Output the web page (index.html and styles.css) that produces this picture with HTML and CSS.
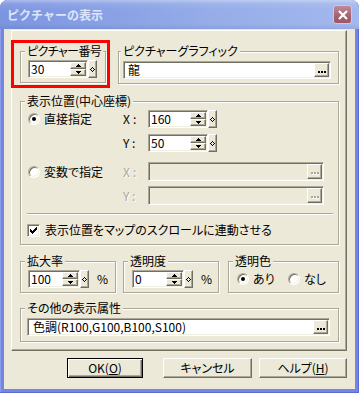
FILE: index.html
```html
<!DOCTYPE html>
<html lang="ja">
<head>
    <meta charset="UTF-8">
    <title>ピクチャーの表示</title>
    <link rel="stylesheet" href="styles.css">
</head>
<body>
    <div class="window">
        <div class="titlebar">
            <span class="title">ピクチャーの表示</span>
            <span class="close-btn">
                <svg width="10" height="10" viewBox="0 0 10 10"><path d="M1 1L9 9M9 1L1 9" stroke="#fff" stroke-width="2.2" fill="none"/></svg>
            </span>
        </div>
        <div class="client">
            <div class="panel">
                <div class="top-row">
                    <div class="marked">
                        <fieldset class="group group-number">
                            <legend>ピクチャー番号</legend>
                            <div class="spin-field inset-3">
                                <div class="textbox w60">
                                    <span class="value">30</span>
                                    <span class="spin">
                                        <span class="spin-btn"><svg width="5" height="3" viewBox="0 0 5 3"><path d="M2 0h1v1h1v1h1v1H0V2h1V1h1z"/></svg></span>
                                        <span class="spin-btn"><svg width="5" height="3" viewBox="0 0 5 3"><path d="M0 0h5v1H4v1H3v1H2V2H1V1H0z"/></svg></span>
                                    </span>
                                </div>
                                <span class="var-btn"><svg width="5" height="5" viewBox="0 0 5 5"><path d="M2 0h1v1H2zM1 1h1v1H1zM3 1h1v1H3zM0 2h1v1H0zM4 2h1v1H4zM1 3h1v1H1zM3 3h1v1H3zM2 4h1v1H2z"/></svg></span>
                            </div>
                        </fieldset>
                        <span class="mark"></span>
                    </div>
                    <fieldset class="group group-graphic">
                        <legend>ピクチャーグラフィック</legend>
                        <div class="textbox browse w208">
                            <span class="value">龍</span>
                            <span class="dots-btn"><svg width="8" height="2" viewBox="0 0 8 2"><path d="M0 0h2v2H0zM3 0h2v2H3zM6 0h2v2H6z"/></svg></span>
                        </div>
                    </fieldset>
                </div>

                <fieldset class="group group-position">
                    <legend>表示位置(中心座標)</legend>
                    <div class="pos-row">
                        <label class="opt pos-opt"><span class="radio checked"></span>直接指定</label>
                        <span class="axis">X:</span>
                        <div class="spin-field">
                            <div class="textbox w60">
                                <span class="value">160</span>
                                <span class="spin">
                                    <span class="spin-btn"><svg width="5" height="3" viewBox="0 0 5 3"><path d="M2 0h1v1h1v1h1v1H0V2h1V1h1z"/></svg></span>
                                    <span class="spin-btn"><svg width="5" height="3" viewBox="0 0 5 3"><path d="M0 0h5v1H4v1H3v1H2V2H1V1H0z"/></svg></span>
                                </span>
                            </div>
                            <span class="var-btn"><svg width="5" height="5" viewBox="0 0 5 5"><path d="M2 0h1v1H2zM1 1h1v1H1zM3 1h1v1H3zM0 2h1v1H0zM4 2h1v1H4zM1 3h1v1H1zM3 3h1v1H3zM2 4h1v1H2z"/></svg></span>
                        </div>
                    </div>
                    <div class="pos-row row-y">
                        <span class="pos-opt"></span>
                        <span class="axis">Y:</span>
                        <div class="spin-field">
                            <div class="textbox w60">
                                <span class="value">50</span>
                                <span class="spin">
                                    <span class="spin-btn"><svg width="5" height="3" viewBox="0 0 5 3"><path d="M2 0h1v1h1v1h1v1H0V2h1V1h1z"/></svg></span>
                                    <span class="spin-btn"><svg width="5" height="3" viewBox="0 0 5 3"><path d="M0 0h5v1H4v1H3v1H2V2H1V1H0z"/></svg></span>
                                </span>
                            </div>
                            <span class="var-btn"><svg width="5" height="5" viewBox="0 0 5 5"><path d="M2 0h1v1H2zM1 1h1v1H1zM3 1h1v1H3zM0 2h1v1H0zM4 2h1v1H4zM1 3h1v1H1zM3 3h1v1H3zM2 4h1v1H2z"/></svg></span>
                        </div>
                    </div>
                    <div class="pos-row tall row-var">
                        <label class="opt pos-opt"><span class="radio"></span>変数で指定</label>
                        <span class="axis disabled">X:</span>
                        <div class="textbox browse disabled w176">
                            <span class="value"></span>
                            <span class="dots-btn"><svg width="8" height="3" viewBox="0 0 8 3"><path d="M1 1h2v2H1zM4 1h2v2H4zM7 1h1v2H7z" fill="#fff"/><path d="M0 0h2v2H0zM3 0h2v2H3zM6 0h2v2H6z" fill="#aca899"/></svg></span>
                        </div>
                    </div>
                    <div class="pos-row tall row-var-y">
                        <span class="pos-opt"></span>
                        <span class="axis disabled">Y:</span>
                        <div class="textbox browse disabled w176">
                            <span class="value"></span>
                            <span class="dots-btn"><svg width="8" height="3" viewBox="0 0 8 3"><path d="M1 1h2v2H1zM4 1h2v2H4zM7 1h1v2H7z" fill="#fff"/><path d="M0 0h2v2H0zM3 0h2v2H3zM6 0h2v2H6z" fill="#aca899"/></svg></span>
                        </div>
                    </div>
                    <div class="separator"></div>
                    <label class="opt check-row">
                        <span class="checkbox"><svg width="7" height="7" viewBox="0 0 7 7"><path d="M0 2h1v1h1v1h1V3h1V2h1V1h1V0h1v3H6v1H5v1H4v1H3v1H2V6H1V5H0z"/></svg></span>表示位置をマップのスクロールに連動させる
                    </label>
                </fieldset>

                <div class="mid-row">
                    <fieldset class="group group-scale">
                        <legend>拡大率</legend>
                        <div class="spin-field inset-3">
                            <div class="textbox w52">
                                <span class="value">100</span>
                                <span class="spin">
                                    <span class="spin-btn"><svg width="5" height="3" viewBox="0 0 5 3"><path d="M2 0h1v1h1v1h1v1H0V2h1V1h1z"/></svg></span>
                                    <span class="spin-btn"><svg width="5" height="3" viewBox="0 0 5 3"><path d="M0 0h5v1H4v1H3v1H2V2H1V1H0z"/></svg></span>
                                </span>
                            </div>
                            <span class="var-btn"><svg width="5" height="5" viewBox="0 0 5 5"><path d="M2 0h1v1H2zM1 1h1v1H1zM3 1h1v1H3zM0 2h1v1H0zM4 2h1v1H4zM1 3h1v1H1zM3 3h1v1H3zM2 4h1v1H2z"/></svg></span>
                            <span class="unit">%</span>
                        </div>
                    </fieldset>
                    <fieldset class="group group-alpha">
                        <legend>透明度</legend>
                        <div class="spin-field inset-4">
                            <div class="textbox w52">
                                <span class="value">0</span>
                                <span class="spin">
                                    <span class="spin-btn"><svg width="5" height="3" viewBox="0 0 5 3"><path d="M2 0h1v1h1v1h1v1H0V2h1V1h1z"/></svg></span>
                                    <span class="spin-btn"><svg width="5" height="3" viewBox="0 0 5 3"><path d="M0 0h5v1H4v1H3v1H2V2H1V1H0z"/></svg></span>
                                </span>
                            </div>
                            <span class="var-btn"><svg width="5" height="5" viewBox="0 0 5 5"><path d="M2 0h1v1H2zM1 1h1v1H1zM3 1h1v1H3zM0 2h1v1H0zM4 2h1v1H4zM1 3h1v1H1zM3 3h1v1H3zM2 4h1v1H2z"/></svg></span>
                            <span class="unit">%</span>
                        </div>
                    </fieldset>
                    <fieldset class="group group-key">
                        <legend>透明色</legend>
                        <div class="key-row">
                            <label class="opt key-opt"><span class="radio checked"></span>あり</label>
                            <label class="opt"><span class="radio"></span>なし</label>
                        </div>
                    </fieldset>
                </div>

                <fieldset class="group group-other">
                    <legend>その他の表示属性</legend>
                    <div class="textbox browse w303">
                        <span class="value">色調(R100,G100,B100,S100)</span>
                        <span class="dots-btn"><svg width="8" height="2" viewBox="0 0 8 2"><path d="M0 0h2v2H0zM3 0h2v2H3zM6 0h2v2H6z"/></svg></span>
                    </div>
                </fieldset>
            </div>

            <div class="actions">
                <span class="btn btn-default btn-ok">OK(<u>O</u>)</span>
                <span class="btn btn-cancel">キャンセル</span>
                <span class="btn btn-help">ヘルプ(<u>H</u>)</span>
            </div>
        </div>
    </div>
</body>
</html>
```

FILE: styles.css
```css
body {
    margin: 0;
    background: #fff;
    font-family: "Noto Sans CJK JP", sans-serif;
    font-size: 12px;
    color: #000;
    font-feature-settings: "palt";
}
.window {
    width: 359px;
    height: 393px;
    display: flex;
    flex-direction: column;
    background: #7486e2;
    border-radius: 8px 8px 0 0;
    box-shadow: inset -1px -1px #5b6bd6, inset 1px 0 #8c9ce9;
    overflow: hidden;
}
.titlebar {
    flex: none;
    height: 29px;
    display: flex;
    align-items: center;
    padding: 0 7px 0 7px;
    background:
        linear-gradient(to bottom, rgba(255,255,255,0.35) 0, rgba(255,255,255,0.08) 4px, rgba(255,255,255,0) 10px, rgba(0,0,40,0) 24px, rgba(0,0,40,0.08) 29px),
        linear-gradient(to right, #7c95e0, #96ade9 60%, #a3b8ee);
}
.title {
    flex: 1;
    font-weight: bold;
    font-size: 12px;
    color: #dce6f8;
    font-feature-settings: normal;
    line-height: 14px;
    padding-top: 1px;
}
.close-btn {
    width: 19px;
    height: 19px;
    box-sizing: border-box;
    display: flex;
    align-items: center;
    justify-content: center;
    border: 1px solid #d9c3d3;
    border-radius: 3px;
    background: linear-gradient(to bottom, #c08b9a, #a4606f 60%, #9c5868);
}
.client {
    flex: 1;
    min-height: 0;
    margin: 0 4px 4px;
    padding: 1px 8px 0 7px;
    background: #ece9d8;
}
.panel {
    width: 336px;
    box-sizing: border-box;
    padding: 13px 7px 8px 8px;
    border: 1px solid;
    border-color: #fff #716f64 #716f64 #fff;
    box-shadow: inset -1px -1px #aca899;
}

/* group boxes */
.group {
    margin: 0;
    min-width: 0;
    padding: 2px 0 4px 4px;
    border: 1px solid #aca899;
    box-shadow: inset 1px 1px #fff, 1px 1px #fff;
}
.group legend {
    padding: 0 2px;
    line-height: 14px;
    white-space: nowrap;
    background: #ece9d8;
}
.top-row {
    display: flex;
    gap: 12px;
    align-items: flex-start;
}
.marked {
    position: relative;
}
.mark {
    position: absolute;
    left: -9px;
    top: -4px;
    right: -4px;
    bottom: -5px;
    border: 3px solid #f00;
    pointer-events: none;
}
.group-number {
    width: 86px;
    box-sizing: border-box;
}
.group-number legend {
    letter-spacing: -0.6px;
}
.group-graphic {
    width: 221px;
    box-sizing: border-box;
}
.group-graphic legend {
    margin-left: -2px;
}
.group-position {
    margin-top: 10px;
    padding-bottom: 5px;
}
.mid-row {
    display: flex;
    margin-top: 9px;
}
.group-scale, .group-alpha {
    width: 96px;
    box-sizing: border-box;
}
.group-alpha {
    margin-left: 7px;
}
.group-key {
    width: 111px;
    box-sizing: border-box;
    margin-left: 9px;
}
.group-other {
    margin-top: 8px;
    padding-top: 3px;
    padding-bottom: 5px;
}

/* text boxes */
.textbox {
    box-sizing: border-box;
    height: 18px;
    display: flex;
    align-items: stretch;
    padding: 1px;
    border: 1px solid;
    border-color: #aca899 #fff #fff #aca899;
    box-shadow: inset 1px 1px #716f64, inset -1px -1px #f1efe2;
    background: #fff;
}
.textbox .value {
    flex: 1;
    line-height: 14px;
    padding-left: 1px;
    white-space: nowrap;
}
.textbox.disabled {
    background: #ece9d8;
    height: 19px;
}
.w60 { width: 60px; }
.w52 { width: 52px; }
.w176 { width: 176px; }
.w208 { width: 208px; margin-top: 1px; }
.w303 { width: 303px; margin-left: 2px; }
.browse .value {
    padding-left: 3px;
}
.group-other .browse .value {
    padding-left: 4px;
}

.spin-field {
    display: flex;
    align-items: center;
    height: 18px;
}
.inset-3 { margin-left: 3px; }
.inset-4 { margin-left: 4px; }
.spin {
    width: 16px;
    display: flex;
    flex-direction: column;
}
.spin-btn, .var-btn, .dots-btn, .btn {
    box-sizing: border-box;
    display: flex;
    align-items: center;
    justify-content: center;
    background: #ece9d8;
    border: 1px solid;
    border-color: #fff #716f64 #716f64 #fff;
    box-shadow: inset -1px -1px #aca899;
}
.spin-btn {
    flex: 1;
}
.var-btn {
    width: 9px;
    height: 18px;
}
.dots-btn {
    width: 15px;
    padding-top: 4px;
}
.unit {
    margin-left: 8px;
    line-height: 18px;
}

/* position rows */
.pos-row {
    display: flex;
    align-items: center;
    height: 18px;
    margin-left: 3px;
}
.pos-row.row-y { margin-top: 6px; }
.pos-row.tall { height: 19px; }
.pos-row.row-var { margin-top: 10px; }
.pos-row.row-var-y { margin-top: 5px; }
.pos-opt {
    width: 95px;
    flex: none;
}
.axis {
    width: 25px;
    flex: none;
    letter-spacing: 3px;
    line-height: 14px;
}
.disabled, .axis.disabled {
    color: #aca899;
    text-shadow: 1px 1px #fff;
}
.separator {
    width: 306px;
    margin: 8px 0 0 2px;
    height: 1px;
    background: #aca899;
    border-bottom: 1px solid #fff;
}
.opt {
    display: flex;
    align-items: center;
    gap: 4px;
    line-height: 14px;
}
.radio {
    width: 12px;
    height: 12px;
    box-sizing: border-box;
    flex: none;
    border-radius: 50%;
    border: 1px solid;
    border-color: #aca899 #fff #fff #aca899;
    box-shadow: inset 1px 1px #716f64, inset -1px -1px #f1efe2;
    background: #fff;
    display: flex;
    align-items: center;
    justify-content: center;
}
.radio.checked::after {
    content: "";
    width: 4px;
    height: 4px;
    border-radius: 50%;
    background: #000;
}
.check-row {
    margin: 6px 0 0 2px;
    height: 18px;
    gap: 5px;
}
.checkbox {
    width: 13px;
    height: 13px;
    box-sizing: border-box;
    flex: none;
    border: 1px solid;
    border-color: #aca899 #fff #fff #aca899;
    box-shadow: inset 1px 1px #716f64, inset -1px -1px #f1efe2;
    background: #fff;
    display: flex;
    align-items: center;
    justify-content: center;
}
.key-row {
    display: flex;
    align-items: center;
    height: 18px;
    margin-left: 4px;
}
.key-opt {
    width: 51px;
}

/* dialog buttons */
.actions {
    display: flex;
    justify-content: flex-end;
    margin-top: 7px;
}
.btn {
    height: 20px;
    line-height: 14px;
}
.btn-default {
    border-color: #000;
    box-shadow: inset 1px 1px #fff, inset -1px -1px #716f64, inset -2px -2px #aca899;
}
.btn-ok { width: 76px; }
.btn-cancel { width: 89px; margin-left: 20px; }
.btn-help { width: 88px; margin-left: 7px; }
```
